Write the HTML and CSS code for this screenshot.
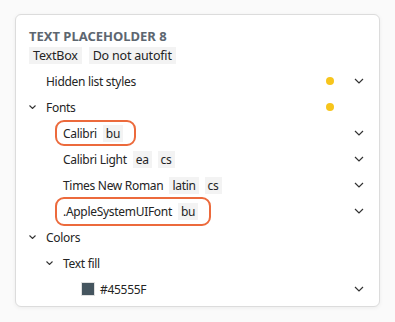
FILE: index.html
```html
<!DOCTYPE html>
<html>
<head>
<meta charset="utf-8">
<link rel="stylesheet" href="styles.css">
</head>
<body>
<div class="card">
  <div class="title">TEXT PLACEHOLDER 8</div>
  <div class="tags">
    <span class="tag">TextBox</span>
    <span class="tag">Do not autofit</span>
  </div>
  <div class="row lvl1">
    <span class="chev-space"></span>
    <span class="label">Hidden list styles</span>
    <span class="dot"></span>
    <svg class="expand" viewBox="0 0 10 6"><path d="M1 1 L5 5 L9 1" /></svg>
  </div>
  <div class="row lvl1">
    <svg class="toggle" viewBox="0 0 7 4"><path d="M0.5 0.5 L3.5 3.5 L6.5 0.5" /></svg>
    <span class="label">Fonts</span>
    <span class="dot"></span>
    <span class="expand-space"></span>
  </div>
  <div class="row lvl2">
    <span class="chev-space"></span>
    <span class="label hl">Calibri <span class="tag">bu</span></span>
    <svg class="expand" viewBox="0 0 10 6"><path d="M1 1 L5 5 L9 1" /></svg>
  </div>
  <div class="row lvl2">
    <span class="chev-space"></span>
    <span class="label plain">Calibri Light <span class="tag">ea</span> <span class="tag">cs</span></span>
    <svg class="expand" viewBox="0 0 10 6"><path d="M1 1 L5 5 L9 1" /></svg>
  </div>
  <div class="row lvl2">
    <span class="chev-space"></span>
    <span class="label plain">Times New Roman <span class="tag">latin</span> <span class="tag">cs</span></span>
    <svg class="expand" viewBox="0 0 10 6"><path d="M1 1 L5 5 L9 1" /></svg>
  </div>
  <div class="row lvl2">
    <span class="chev-space"></span>
    <span class="label hl tall">.AppleSystemUIFont <span class="tag">bu</span></span>
    <svg class="expand" viewBox="0 0 10 6"><path d="M1 1 L5 5 L9 1" /></svg>
  </div>
  <div class="row lvl1">
    <svg class="toggle" viewBox="0 0 7 4"><path d="M0.5 0.5 L3.5 3.5 L6.5 0.5" /></svg>
    <span class="label">Colors</span>
  </div>
  <div class="row lvl2">
    <svg class="toggle" viewBox="0 0 7 4"><path d="M0.5 0.5 L3.5 3.5 L6.5 0.5" /></svg>
    <span class="label">Text fill</span>
  </div>
  <div class="row lvl3">
    <span class="chev-space"></span>
    <span class="label"><span class="swatch"></span>#45555F</span>
    <svg class="expand" viewBox="0 0 10 6"><path d="M1 1 L5 5 L9 1" /></svg>
  </div>
</div>
</body>
</html>
```
FILE: styles.css
```css
html, body { margin: 0; padding: 0; }
body {
  background: #fafafa;
  font-family: "Segoe UI", "Noto Sans", sans-serif;
  font-size: 12px;
  letter-spacing: -0.3px;
  color: #242424;
  padding: 14px 15px 15px 15px;
  width: 395px;
  box-sizing: border-box;
}
.card {
  width: 365px;
  height: 293px;
  box-sizing: border-box;
  background: #fff;
  border: 1px solid #dcdcdc;
  border-radius: 6px;
  box-shadow: 0 1px 4px rgba(0,0,0,0.06);
  padding: 12px 15px 0 13px;
}
.title {
  font-weight: bold;
  font-size: 13px;
  letter-spacing: 0;
  color: #5d6670;
  line-height: 16px;
  margin-top: 1px;
}
.tags { display: flex; gap: 7px; margin-top: 3px; margin-bottom: 4px; }
.tags .tag { padding: 0 4px; font-size: 12.5px; letter-spacing: -0.2px; }
.tag {
  background: #f3f3f3;
  padding: 0 3px;
  line-height: 17px;
  display: inline-block;
}
.row {
  display: flex;
  align-items: center;
  height: 26px;
}
.lvl1 { padding-left: 0; }
.lvl2 { padding-left: 17px; }
.lvl3 { padding-left: 35px; }
.chev-space, .toggle { width: 7px; flex: none; margin-right: 10px; }
.toggle { height: 4px; fill: none; stroke: #333; stroke-width: 1.1; }
.label { flex: 1; display: flex; align-items: center; gap: 6px; white-space: nowrap; }
.label.hl {
  flex: none;
  height: 26px;
  box-sizing: border-box;
  border: 2px solid #ec6a3c;
  border-radius: 9px;
  padding: 0 11px 0 6px;
  margin-left: -8px;
  margin-right: auto;
}
.label.hl.tall { height: 29px; }
.dot {
  width: 8px; height: 8px; border-radius: 50%;
  background: #f7c51c; flex: none;
  margin-right: 20px;
}
.expand, .expand-space { width: 10px; height: 6px; flex: none; fill: none; stroke: #333; stroke-width: 1.2; }
.swatch {
  width: 14px; height: 14px; background: #45555f; display: inline-block;
  border: 1px solid #e0e0e0; box-sizing: border-box; margin-right: -1px;
}
```
